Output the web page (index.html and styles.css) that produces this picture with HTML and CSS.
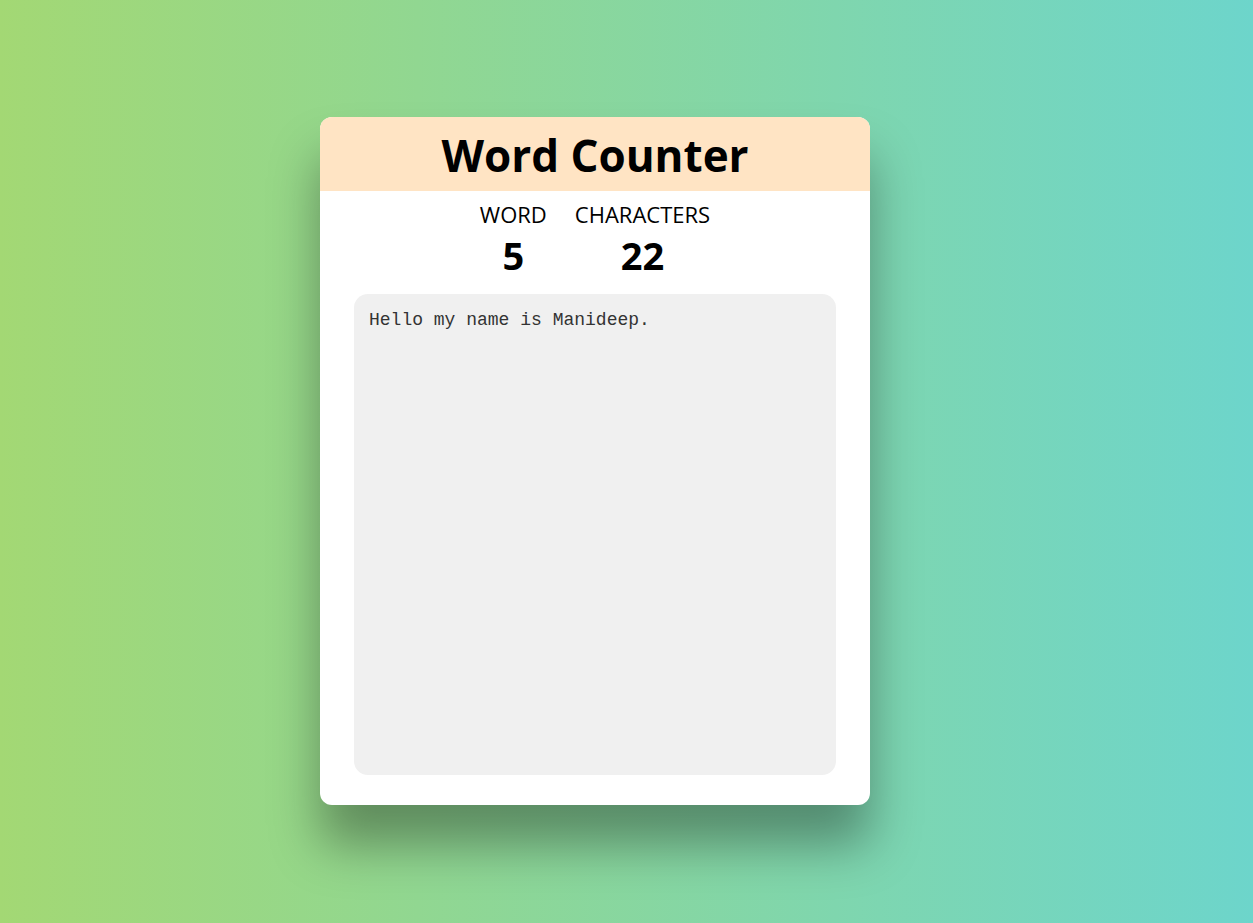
FILE: index.html
```html
<!DOCTYPE html>
<html lang="en">
<head>
<meta charset="utf-8">
<title>Word Counter</title>
<link rel="stylesheet" href="styles.css">
</head>
<body>
<div class="card">
  <h1 class="title">Word Counter</h1>
  <div class="stats">
    <div class="stat">
      <div class="label">WORD</div>
      <div class="value">5</div>
    </div>
    <div class="stat">
      <div class="label">CHARACTERS</div>
      <div class="value">22</div>
    </div>
  </div>
  <textarea class="input" id="input" spellcheck="false">Hello my name is Manideep.</textarea>
</div>
<script src="script.js"></script>
</body>
</html>
```
FILE: styles.css
```css
html, body {
  margin: 0;
  height: 100%;
}
body {
  background: linear-gradient(to right, #a3d874, #6dd5cb);
  font-family: "Open Sans", sans-serif;
  overflow: hidden;
}
.card {
  width: 550px;
  height: 688px;
  margin: 117px 0 0 320px;
  background: #fff;
  border-radius: 12px;
  overflow: hidden;
  box-shadow: 0 40px 50px rgba(0, 0, 0, 0.35);
  display: flex;
  flex-direction: column;
  align-items: center;
}
.title {
  width: 100%;
  margin: 0;
  height: 74px;
  background: #ffe4c4;
  font-size: 44px;
  font-weight: 700;
  line-height: 76px;
  text-align: center;
  color: #000;
}
.stats {
  display: flex;
  gap: 28px;
  margin-top: 8px;
}
.stat {
  text-align: center;
}
.label {
  font-size: 22px;
  line-height: 30px;
}
.value {
  font-size: 38px;
  font-weight: 700;
  line-height: 52px;
}
.input {
  margin-top: 13px;
  width: 482px;
  height: 481px;
  box-sizing: border-box;
  border: none;
  outline: none;
  resize: none;
  background: #f0f0f0;
  border-radius: 14px;
  padding: 13px 15px;
  font-family: "Liberation Mono", monospace;
  font-size: 18px;
  line-height: 26px;
  color: #333;
  caret-color: #000;
}
```
FILE: script.js
```js
var input = document.getElementById('input');
input.focus();
input.setSelectionRange(input.value.length, input.value.length);
```
